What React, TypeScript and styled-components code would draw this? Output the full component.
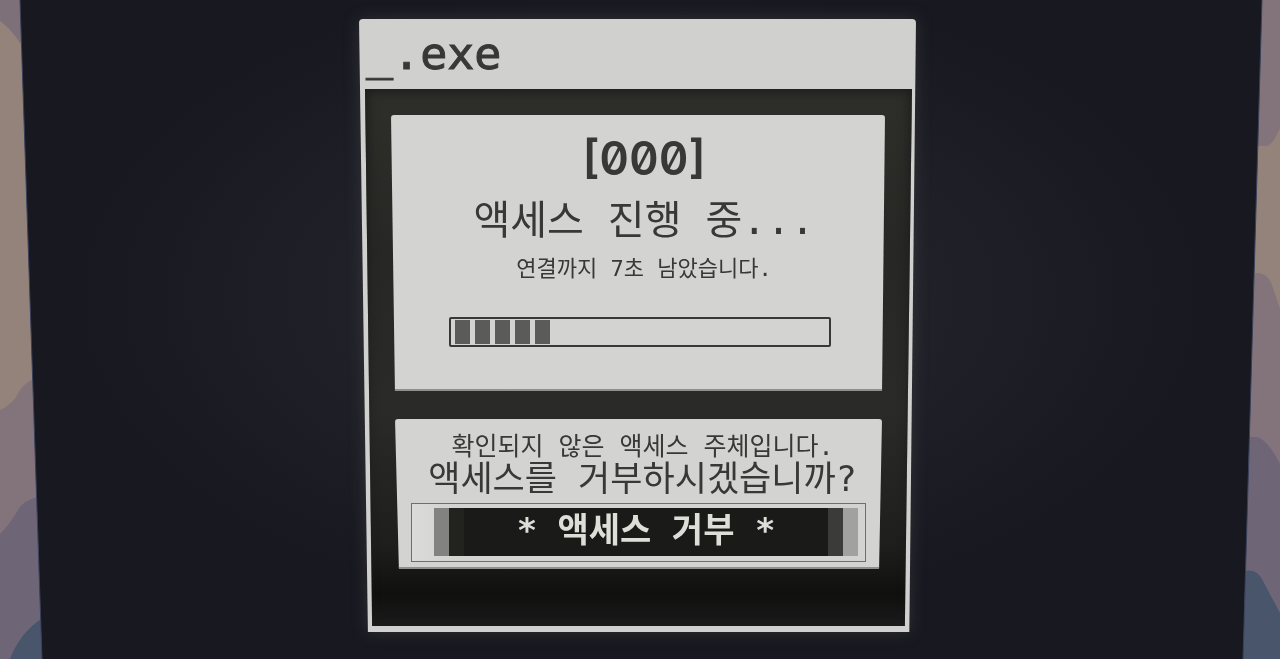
import React from "react";
import styled, { createGlobalStyle } from "styled-components";

const INK = "#383836";
const PAPER = "#d3d3d1";

const GlobalStyle = createGlobalStyle`
  *, *::before, *::after { box-sizing: border-box; }
  body {
    margin: 0;
    background: #181822;
    color: ${INK};
    font-family: "DejaVu Sans Mono", "Noto Sans CJK KR", monospace;
  }
`;

const Stage = styled.main`
  position: relative;
  min-height: 100vh;
  padding: 19px 5px 27px 0;
  display: flex;
  justify-content: center;
  align-items: flex-start;
  overflow: hidden;
  background: radial-gradient(ellipse at 50% 45%, #26262d 0%, #21212a 30%, #181820 62%, #181822 100%);
`;

const Scenery = styled.svg`
  position: absolute;
  inset: 0;
  width: 100%;
  height: 100%;
`;

const Glow = styled.div`
  position: relative;
  width: 100%;
  max-width: 557px;
  filter: drop-shadow(0 0 8px rgba(90, 90, 84, 0.35));
`;

const Window = styled.section`
  padding: 0 4px 6px 6px;
  border-radius: 4px;
  background: #d0d0ce;
  clip-path: polygon(0 0, 100% 0, 98.8% 100%, 1.6% 100%);
`;

const TitleBar = styled.header`
  height: 70px;
  padding: 7px 0 0 1px;
`;

const Title = styled.h1`
  margin: 0;
  font-size: 45px;
  line-height: 56px;
  font-weight: 400;
  -webkit-text-stroke: 1px ${INK};
`;

const Body = styled.div`
  display: flex;
  flex-direction: column;
  gap: 28px;
  padding: 26px 27px 57px 26px;
  background: linear-gradient(#2e2e2a 0%, #272725 30%, #2a2a28 60%, #1e1e1c 85%, #10100e 94%, #1b1b1c 100%);
  box-shadow: inset 0 0 12px 2px #1b1b1b;
  clip-path: polygon(0 0, 100% 0, 98.7% 100%, 1.3% 100%);
`;

const Panel = styled.div<{ $lower?: boolean }>`
  display: flex;
  flex-direction: column;
  border-radius: 3px;
  background: ${PAPER};
  border-bottom: 2px solid #8f8f8d;
  margin: ${(p) => (p.$lower ? "0 3px 0 4px" : "0")};
  padding: ${(p) => (p.$lower ? "12px 16px 5px" : "19px 54px 42px 58px")};
  clip-path: polygon(0 0, 100% 0, 99.4% 100%, 0.8% 100%);
`;

const Line = styled.p<{ $size: number; $height: number }>`
  margin: 0;
  padding-left: 8px;
  text-align: center;
  white-space: nowrap;
  font-size: ${(p) => p.$size}px;
  line-height: ${(p) => p.$height}px;
`;

const Counter = styled(Line)`
  font-family: Inter, "DejaVu Sans Mono", sans-serif;
  font-weight: 600;
  font-feature-settings: "zero" 1, "tnum" 1;
`;

const Progress = styled.div`
  display: flex;
  gap: 5px;
  height: 30px;
  margin-top: 37px;
  padding: 1px 4px;
  border: 2px solid ${INK};
  border-radius: 2px;
`;

const Segment = styled.span`
  width: 15px;
  background: #5b5b59;
`;

const ButtonFrame = styled.div`
  margin-top: 8px;
  padding: 4px 7px 5px 22px;
  border: 1px solid #6f6f6d;
  background: linear-gradient(90deg, #dbdbd9, ${PAPER} 8%);
`;

const DenyButton = styled.button`
  display: block;
  width: 100%;
  height: 48px;
  padding: 0 0 4px;
  border: 0;
  color: #deded9;
  font-family: inherit;
  font-size: 34px;
  line-height: 44px;
  font-weight: 700;
  white-space: nowrap;
  cursor: pointer;
  background: linear-gradient(
    90deg,
    #828280 0 15px,
    #22231f 15px 30px,
    #1a1a18 30px calc(100% - 30px),
    #3b3b39 calc(100% - 30px) calc(100% - 15px),
    #a1a19f calc(100% - 15px)
  );
`;

const SEGMENTS = 5;

export default function App() {
  return (
    <>
      <GlobalStyle />
      <Stage>
        <Scenery viewBox="0 0 1280 659" preserveAspectRatio="none" aria-hidden="true">
          <defs>
            <clipPath id="edges">
              <path d="M0 0H20L42 659H0ZM1280 0H1262L1243 659H1280Z" />
            </clipPath>
          </defs>
          <g clipPath="url(#edges)">
            <path fill="#7d7078" d="M0 0H50V60H0Z" />
            <path fill="#93837b" d="M0 21Q12 30 20 43H50V420H0Z" />
            <path fill="#83747b" d="M0 410Q14 404 20 390Q27 380 42 376V560H0Z" />
            <path fill="#6e6577" d="M0 534Q10 524 18 510Q26 496 50 496V659H0Z" />
            <path fill="#48556b" d="M10 659Q22 628 50 614V659Z" />
            <path fill="#83747b" d="M1235 0H1280V160H1235Z" />
            <path fill="#93837b" d="M1235 146H1268Q1274 142 1280 128V320H1235Z" />
            <path fill="#83747b" d="M1235 280L1257 273Q1268 272 1273 288L1280 309V470H1235Z" />
            <path fill="#6e6577" d="M1235 437H1257Q1268 440 1280 464V620H1235Z" />
            <path fill="#48556b" d="M1235 576Q1255 562 1264 583L1280 613V659H1235Z" />
          </g>
          <path fill="none" stroke="#39405c" strokeWidth="1" d="M20 0L42 659M1262 0L1243 659" />
        </Scenery>

        <Glow>
          <Window aria-labelledby="window-title">
            <TitleBar>
              <Title id="window-title">_.exe</Title>
            </TitleBar>
            <Body>
              <Panel>
                <Counter $size={46} $height={48}>[000]</Counter>
                <Line $size={40} $height={76}>액세스 진행 중...</Line>
                <Line $size={22} $height={22}>연결까지 7초 남았습니다.</Line>
                <Progress
                  role="progressbar"
                  aria-label="액세스 진행 중"
                  aria-valuemin={0}
                  aria-valuemax={100}
                  aria-valuenow={26}
                >
                  {Array.from({ length: SEGMENTS }, (_, i) => (
                    <Segment key={i} />
                  ))}
                </Progress>
              </Panel>
              <Panel $lower>
                <Line $size={25} $height={32}>확인되지 않은 액세스 주체입니다.</Line>
                <Line $size={35} $height={32}>액세스를 거부하시겠습니까?</Line>
                <ButtonFrame>
                  <DenyButton type="button">* 액세스 거부 *</DenyButton>
                </ButtonFrame>
              </Panel>
            </Body>
          </Window>
        </Glow>
      </Stage>
    </>
  );
}
